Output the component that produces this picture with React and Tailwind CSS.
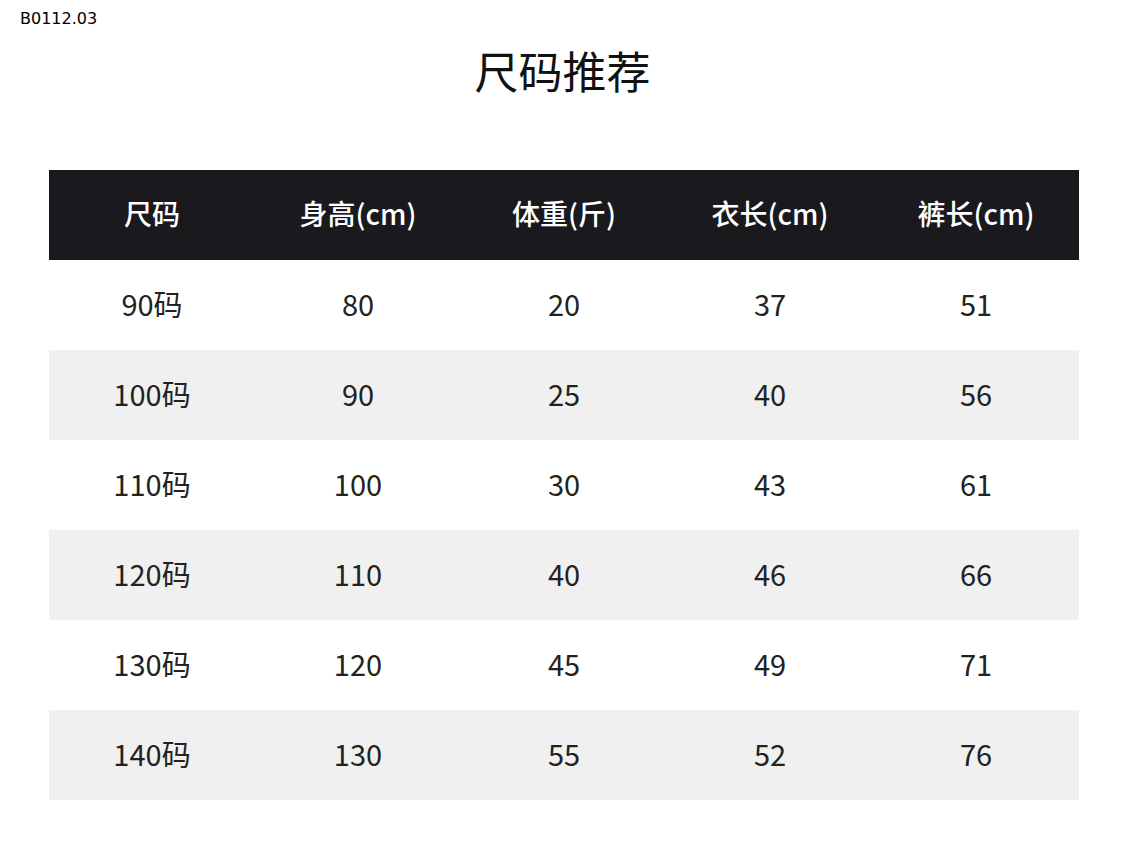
import React from "react";

const headers = ["尺码", "身高(cm)", "体重(斤)", "衣长(cm)", "裤长(cm)"];
const rows = [
  ["90码", "80", "20", "37", "51"],
  ["100码", "90", "25", "40", "56"],
  ["110码", "100", "30", "43", "61"],
  ["120码", "110", "40", "46", "66"],
  ["130码", "120", "45", "49", "71"],
  ["140码", "130", "55", "52", "76"],
];

const cjk = { fontFamily: '"Noto Sans CJK SC", "Noto Sans", sans-serif' };

export default function App() {
  return (
    <div className="w-[1125px] h-[847px] bg-white relative overflow-hidden" style={cjk}>
      <div
        className="absolute left-[20px] top-[8px] text-[16px] text-black leading-[22px]"
        style={{ fontFamily: '"DejaVu Sans", sans-serif' }}
      >
        B0112.03
      </div>
      <div className="pt-[40px] h-[170px] text-center text-[44px] leading-[60px] text-[#111]">
        尺码推荐
      </div>
      <div className="ml-[49px] w-[1030px]">
        <div className="grid grid-cols-5 h-[90px] bg-[#1a191e] items-center text-white text-[28px] font-medium pb-[5px]">
          {headers.map((h) => (
            <div key={h} className="text-center">{h}</div>
          ))}
        </div>
        {rows.map((r, i) => (
          <div
            key={i}
            className={`grid grid-cols-5 h-[90px] items-center text-[29px] text-[#222] pb-[2px] ${i % 2 === 1 ? "bg-[#f0f0f0]" : "bg-white"}`}
          >
            {r.map((c, j) => (
              <div key={j} className="text-center">{c}</div>
            ))}
          </div>
        ))}
      </div>
    </div>
  );
}
